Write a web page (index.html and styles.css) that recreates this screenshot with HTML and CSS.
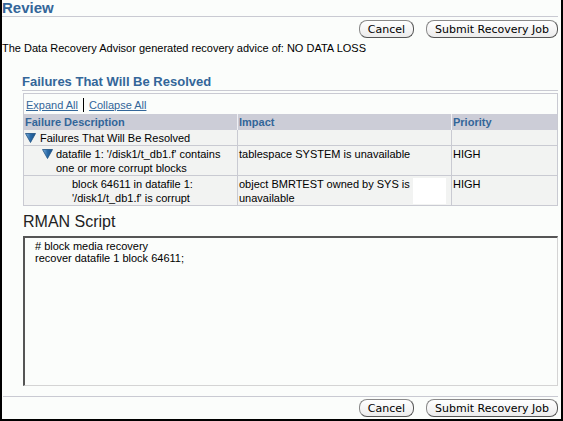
FILE: index.html
```html
<!DOCTYPE html>
<html>
<head>
<meta charset="utf-8">
<link rel="stylesheet" href="styles.css">
</head>
<body>
<div class="page">
  <h1 class="title">Review</h1>
  <div class="buttons top">
    <button class="btn">Cancel</button>
    <button class="btn">Submit Recovery Job</button>
  </div>
  <p class="advice">The Data Recovery Advisor generated recovery advice of: NO DATA LOSS</p>
  <h2 class="section">Failures That Will Be Resolved</h2>
  <div class="tablebox">
    <div class="links"><a href="#">Expand All</a><span class="sep"></span><a href="#">Collapse All</a></div>
    <table class="grid">
      <thead>
        <tr><th class="c1">Failure Description</th><th class="c2">Impact</th><th class="c3">Priority</th></tr>
      </thead>
      <tbody>
        <tr class="r1">
          <td><span class="node lvl0"><svg class="tri" width="11" height="10" viewBox="0 0 11 10"><defs><linearGradient id="g1" x1="0" y1="0" x2="1" y2="0"><stop offset="0" stop-color="#7fb0dc"/><stop offset="0.5" stop-color="#2a6aa8"/><stop offset="1" stop-color="#1a4f86"/></linearGradient></defs><polygon points="0.5,0.5 10.5,0.5 5.5,9.5" fill="url(#g1)" stroke="#1d4f80" stroke-width="0.8"/></svg>Failures That Will Be Resolved</span></td>
          <td></td><td></td>
        </tr>
        <tr class="r2">
          <td><div class="node lvl1"><svg class="tri" width="11" height="10" viewBox="0 0 11 10"><polygon points="0.5,0.5 10.5,0.5 5.5,9.5" fill="url(#g1)" stroke="#1d4f80" stroke-width="0.8"/></svg><span>datafile 1: '/disk1/t_db1.f' contains one or more corrupt blocks</span></div></td>
          <td>tablespace SYSTEM is unavailable</td>
          <td>HIGH</td>
        </tr>
        <tr class="r3">
          <td><div class="node lvl2"><span>block 64611 in datafile 1: '/disk1/t_db1.f' is corrupt</span></div></td>
          <td class="impact"><div class="impact-text">object BMRTEST owned by SYS is<br>unavailable</div><span class="blank"></span></td>
          <td>HIGH</td>
        </tr>
      </tbody>
    </table>
  </div>
  <h3 class="rman">RMAN Script</h3>
  <div class="script"># block media recovery
recover datafile 1 block 64611;</div>
  <div class="rule"></div>
  <div class="buttons bottom">
    <button class="btn">Cancel</button>
    <button class="btn">Submit Recovery Job</button>
  </div>
</div>
</body>
</html>
```

FILE: styles.css
```css
html, body {
  margin: 0;
  padding: 0;
}
body {
  width: 563px;
  height: 421px;
  overflow: hidden;
  background: #fbfdfb;
}
.page {
  box-sizing: border-box;
  width: 563px;
  height: 421px;
  border-left: 2px solid #000;
  border-right: 2px solid #000;
  border-bottom: 2px solid #000;
  background: #fbfdfb;
  font-family: "Liberation Sans", Arial, sans-serif;
  font-size: 11px;
  color: #000;
  display: flex;
  flex-direction: column;
}
.title {
  margin: 0 3px 0 0;
  padding: 0;
  height: 16px;
  line-height: 16px;
  font-size: 15px;
  font-weight: bold;
  color: #336699;
  border-bottom: 1px solid #c9cad2;
}
.buttons {
  display: flex;
  justify-content: flex-end;
  gap: 12px;
  padding-right: 3px;
}
.buttons.top {
  margin-top: 3px;
}
.btn {
  font-family: "DejaVu Sans", sans-serif;
  font-size: 11px;
  height: 18px;
  padding: 0 8px;
  line-height: 15px;
  color: #000;
  background: linear-gradient(#ffffff, #ececec);
  border: 1px solid #8a8a8a;
  border-right-color: #555;
  border-bottom-color: #555;
  border-radius: 8px;
}
.advice {
  margin: 3px 0 0 0;
  line-height: 14px;
}
.section {
  margin: 19px 3px 0 20px;
  font-size: 13px;
  font-weight: bold;
  color: #336699;
  line-height: 16px;
  height: 16px;
  border-bottom: 1px solid #c9cad2;
  padding-bottom: 0;
}
.tablebox {
  margin: 2px 3px 0 21px;
  border: 1px solid #c9cad2;
  border-bottom: none;
}
.links {
  height: 19px;
  display: flex;
  align-items: center;
  padding-left: 2px;
  padding-top: 1px;
}
.links a {
  color: #336699;
  text-decoration: underline;
}
.sep {
  display: inline-block;
  width: 1px;
  height: 14px;
  background: #000;
  margin: 0 5px;
}
.grid {
  width: 100%;
  border-collapse: collapse;
  table-layout: fixed;
}
.grid th {
  background: #cccdd7;
  color: #336699;
  font-weight: bold;
  font-size: 11px;
  text-align: left;
  height: 16px;
  line-height: 16px;
  padding: 0 1px;
  border-right: 1px solid #f0f0f4;
}
.grid th:last-child {
  border-right: none;
}
.c1 { width: 211px; }
.c2 { width: 211px; }
.grid td {
  background: #f2f3f2;
  vertical-align: top;
  padding: 1px 1px 0 1px;
  line-height: 14px;
  border: 1px solid #c9cad2;
  border-top: none;
}
.grid td:first-child { border-left: none; }
.grid td:last-child { border-right: none; }
.r1 td { height: 14px; }
.node {
  display: flex;
  align-items: flex-start;
}
.tri {
  flex: none;
  margin-right: 4px;
  margin-top: 2px;
}
.lvl1 { padding-left: 17px; }
.lvl1 .tri { margin-right: 3px; }
.lvl2 { padding-left: 47px; }
.impact {
  position: relative;
}
.impact-text {
  white-space: nowrap;
}
.blank {
  position: absolute;
  left: 175px;
  top: 2px;
  width: 33px;
  height: 26px;
  background: #ffffff;
}
.rman {
  margin: 7px 0 0 21px;
  font-size: 16px;
  font-weight: normal;
  color: #222;
  line-height: 18px;
  font-family: "Liberation Sans", Arial, sans-serif;
}
.script {
  margin: 5px 3px 0 21px;
  height: 150px;
  box-sizing: border-box;
  border-top: 2px solid #555;
  border-left: 2px solid #555;
  border-right: 1px solid #d4d4d4;
  border-bottom: 1px solid #d4d4d4;
  background: #fbfdfb;
  white-space: pre;
  padding: 2px 10px;
  line-height: 12px;
  font-size: 11px;
}
.rule {
  margin: 10px 3px 0 1px;
  border-top: 1px solid #c9cad2;
}
.buttons.bottom {
  margin-top: 2px;
}
```
